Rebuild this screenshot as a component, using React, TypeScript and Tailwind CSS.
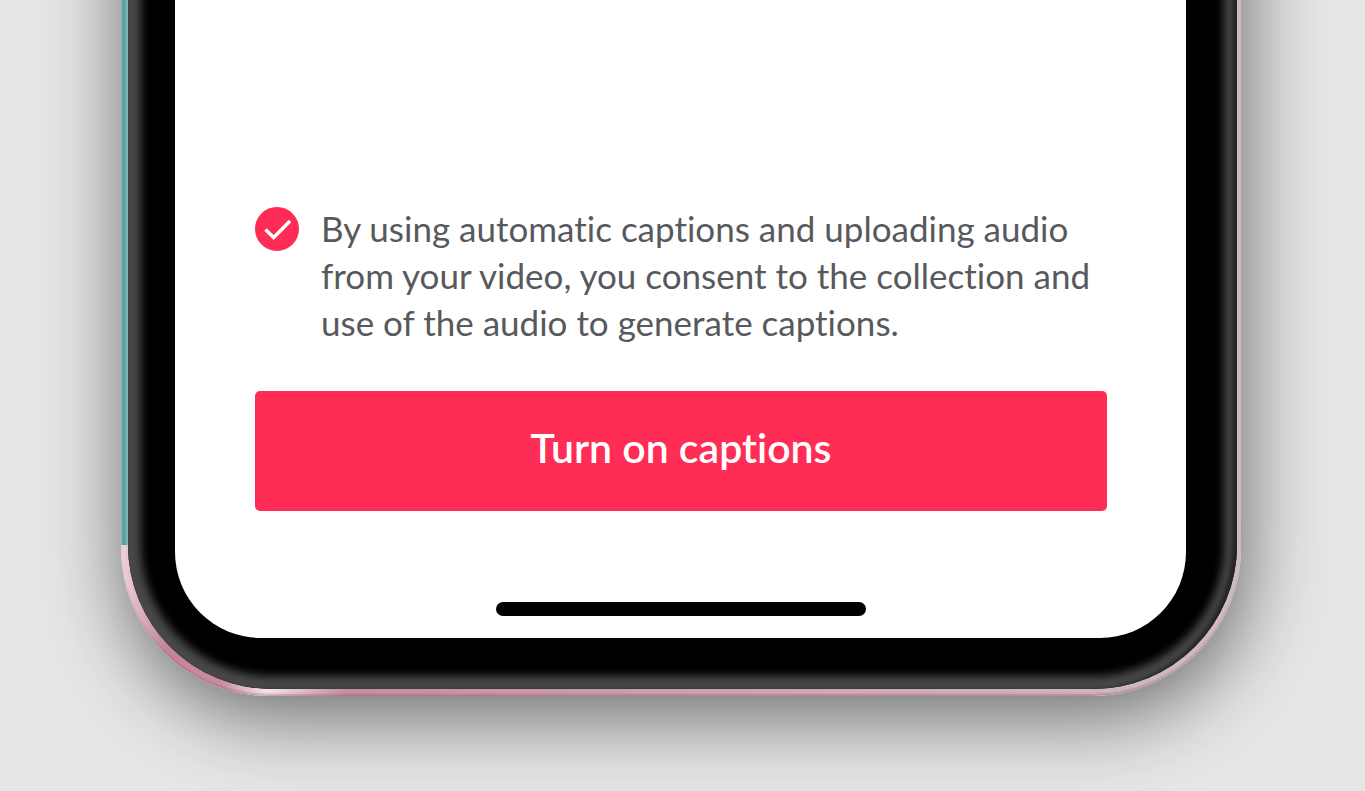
import { useState } from "react";

function ConsentCheckbox({
  checked,
  onChange,
}: {
  checked: boolean;
  onChange: (checked: boolean) => void;
}) {
  return (
    <span className="relative mt-0.5 size-11 shrink-0">
      <input
        id="consent"
        type="checkbox"
        checked={checked}
        onChange={(e) => onChange(e.target.checked)}
        className="block size-11 appearance-none rounded-full border-2 border-[#ff2c55] bg-white checked:bg-[#ff2c55]"
      />
      {checked ? (
        <svg
          viewBox="0 0 44 44"
          className="pointer-events-none absolute inset-0 size-11"
          fill="none"
          stroke="#fff"
          strokeWidth="3.4"
          aria-hidden="true"
        >
          <path d="M10.5 22.5 L18.7 30.5 L35 14" />
        </svg>
      ) : null}
    </span>
  );
}

export default function App() {
  const [consent, setConsent] = useState(true);

  return (
    <main className="min-h-screen overflow-hidden bg-[#e6e6e6] pr-[124px] pb-24 pl-[121px] font-['Lato',sans-serif] [font-variant-ligatures:none]">
      {/* Metal rim: teal down the left side, pink round the bottom */}
      <div className="-mt-40 rounded-b-[148px] bg-[linear-gradient(to_right,#8fc4c4,#4e9a9a_35%,#86bcbc),linear-gradient(to_right,#efd3dc,#c2849a_4%,#c98da2_9%,#f3e4e8_13%,#c58fa2_20%,#cfa8b6_60%,#cdbcc2)] bg-[length:7px_calc(100%-151px),100%_100%] bg-no-repeat pr-1 pb-[7px] pl-[7px] shadow-[inset_0_-3px_2px_-1px_rgba(150,90,112,0.45),4px_20px_80px_rgba(0,0,0,0.54)]">
        {/* Glass with a soft bevel */}
        <div className="rounded-b-[144px] bg-black pt-10 pr-[51px] pb-[51px] pl-[47px] shadow-[inset_-6px_0_4px_-1px_#242424,inset_0_0_8px_13px_#484848]">
          <section className="rounded-b-[86px] bg-white pt-[325px] pr-[79px] pb-[22px] pl-20">
            <div className="flex items-start gap-[22px]">
              <ConsentCheckbox checked={consent} onChange={setConsent} />
              <label
                htmlFor="consent"
                className="text-[35px] leading-[47px] text-[#58595d]"
              >
                By using automatic captions and uploading audio from your video,
                you consent to the collection and use of the audio to generate
                captions.
              </label>
            </div>
            <button
              type="button"
              disabled={!consent}
              className="mt-[45px] block h-30 w-full rounded-[5px] bg-[#ff2c55] pb-1.5 text-[41px] font-semibold text-white"
            >
              Turn on captions
            </button>
            <div className="mx-auto mt-[91px] h-3.5 w-[370px] rounded-full bg-black" />
          </section>
        </div>
      </div>
    </main>
  );
}
